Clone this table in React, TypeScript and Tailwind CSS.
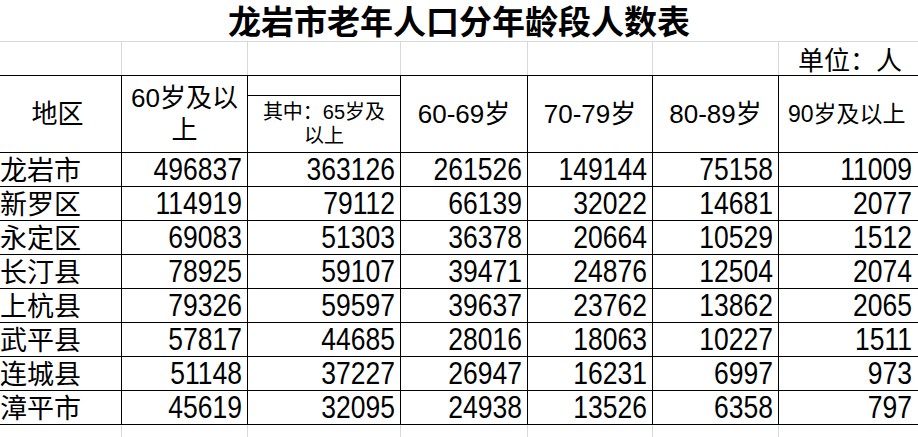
import React from 'react';

const rows = [
  ['龙岩市', 496837, 363126, 261526, 149144, 75158, 11009],
  ['新罗区', 114919, 79112, 66139, 32022, 14681, 2077],
  ['永定区', 69083, 51303, 36378, 20664, 10529, 1512],
  ['长汀县', 78925, 59107, 39471, 24876, 12504, 2074],
  ['上杭县', 79326, 59597, 39637, 23762, 13862, 2065],
  ['武平县', 57817, 44685, 28016, 18063, 10227, 1511],
  ['连城县', 51148, 37227, 26947, 16231, 6997, 973],
  ['漳平市', 45619, 32095, 24938, 13526, 6358, 797],
];

// column widths incl. right border; first column starts 6px off-screen
const widths = ['w-[128px]', 'w-[126px]', 'w-[153px]', 'w-[127px]', 'w-[125px]', 'w-[126px]', 'w-[146px]'];

export default function App() {
  return (
    <div className="w-[918px] h-[437px] overflow-hidden bg-white text-black font-['Liberation_Sans','Noto_Sans_CJK_SC',sans-serif]">
      {/* title */}
      <div className="w-[918px] h-[42px] border-b border-[#d9d9d9] flex items-center justify-center">
        <h1 className="text-[33px] font-bold leading-[41px] font-['Noto_Sans_CJK_SC',serif]">
          龙岩市老年人口分年龄段人数表
        </h1>
      </div>

      <div className="-ml-[6px] w-[930px]">
        {/* unit row */}
        <div className="flex h-[33px]">
          {widths.map((w, i) => (
            <div
              key={i}
              className={`${w} shrink-0 h-full ${i < 6 ? 'border-r border-[#d9d9d9]' : ''} flex items-center justify-center`}
            >
              {i === 6 && <span className="text-[26px] leading-[32px] pr-[4px] font-['Noto_Sans_CJK_SC',sans-serif]">单位：人</span>}
            </div>
          ))}
        </div>

        {/* header */}
        <div className="flex h-[78px] border-y border-black">
          <div className={`${widths[0]} shrink-0 border-r border-black flex items-center justify-center text-[26px]`}>
            地区
          </div>
          <div className={`${widths[1]} shrink-0 border-r border-black flex items-center justify-center px-[5px] text-center text-[26px] leading-[32px]`}>
            60岁及以上
          </div>
          <div className={`${widths[2]} shrink-0 border-r border-black flex flex-col`}>
            <div className="h-[20px] border-b border-black" />
            <div className="flex-1 flex items-center justify-center text-center text-[20px] leading-[24px] whitespace-nowrap">
              <span>
                其中：65岁及
                <br />
                以上
              </span>
            </div>
          </div>
          <div className={`${widths[3]} shrink-0 border-r border-black flex items-center justify-center text-[26px]`}>
            60-69岁
          </div>
          <div className={`${widths[4]} shrink-0 border-r border-black flex items-center justify-center text-[26px]`}>
            70-79岁
          </div>
          <div className={`${widths[5]} shrink-0 border-r border-black flex items-center justify-center text-[26px]`}>
            80-89岁
          </div>
          <div className={`${widths[6]} shrink-0 flex items-center pl-[9px] text-[23px] whitespace-nowrap`}>
            90岁及以上
          </div>
        </div>

        {/* data */}
        {rows.map((r) => (
          <div key={r[0]} className="flex h-[34px] border-b border-black">
            {r.map((v, i) =>
              i === 0 ? (
                <div
                  key={i}
                  className={`${widths[0]} shrink-0 border-r border-black flex items-center pl-[6px] pt-[3px] text-[27px] leading-none`}
                >
                  {v}
                </div>
              ) : (
                <div
                  key={i}
                  className={`${widths[i]} shrink-0 ${i < 6 ? 'border-r border-black pr-[5px]' : 'pr-[13px]'} flex items-center justify-end text-[26.5px] leading-none`}
                >
                  <span className="inline-block scale-y-[1.18]">{v}</span>
                </div>
              )
            )}
          </div>
        ))}

        {/* empty grid below */}
        <div className="flex h-[20px]">
          {widths.map((w, i) => (
            <div key={i} className={`${w} shrink-0 h-full ${i < 6 ? 'border-r border-[#d9d9d9]' : ''}`} />
          ))}
        </div>
      </div>
    </div>
  );
}
